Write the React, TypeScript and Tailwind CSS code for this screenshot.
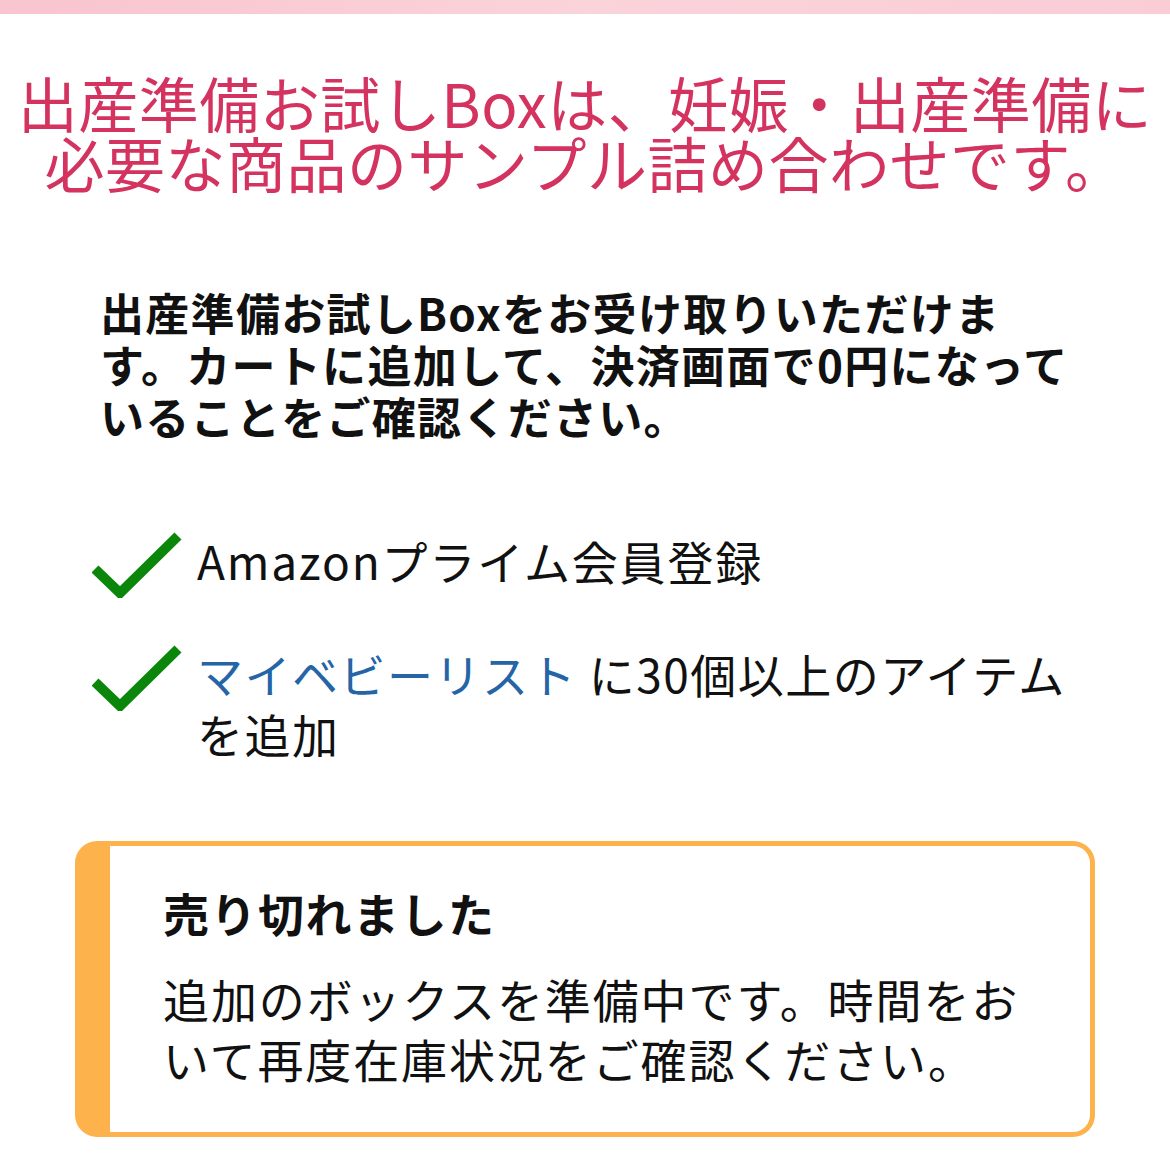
import React from 'react';

const JP = { fontFamily: '"Noto Sans CJK JP", "Noto Sans", sans-serif' };

function Check() {
  return (
    <svg width="90" height="66" viewBox="0 0 90 66" className="shrink-0 mt-[2px]">
      <polyline points="3,37 28,61 86,4" fill="none" stroke="#0a870a" strokeWidth="10" />
    </svg>
  );
}

export default function App() {
  return (
    <div className="w-[1170px] min-h-[1163px] bg-white text-[#111]" style={JP}>
      <div className="h-[14px] bg-gradient-to-r from-[#f8c4cf] via-[#fbd3db] to-[#f9ccd6]" />

      <h1 className="mt-[58px] text-center text-[60px] leading-[60px] font-normal text-[#d3335e] tracking-[0.5px]">
        出産準備お試しBoxは、妊娠・出産準備に
        <br />
        必要な商品のサンプル詰め合わせです。
      </h1>

      <p className="mt-[94px] pl-[100px] text-[44px] leading-[52px] font-bold tracking-[1.3px]">
        出産準備お試しBoxをお受け取りいただけま
        <br />
        す。カートに追加して、決済画面で0円になって
        <br />
        いることをご確認ください。
      </p>

      <ul className="mt-[88px] pl-[92px] flex flex-col gap-[45px]">
        <li className="flex items-start gap-[15px]">
          <Check />
          <span className="text-[46px] leading-[60px] tracking-[1.8px]">Amazonプライム会員登録</span>
        </li>
        <li className="flex items-start gap-[15px]">
          <Check />
          <span className="text-[46px] leading-[60px] tracking-[1.5px]">
            <span className="text-[#2565a6]">マイベビーリスト</span> に30個以上のアイテム
            <br />
            を追加
          </span>
        </li>
      </ul>

      <div className="mt-[78px] ml-[75px] w-[1020px] h-[296px] rounded-[22px] border-[5px] border-l-[35px] border-[#fdb24c] pl-[53px] pt-[40px]">
        <div className="text-[46px] leading-[52px] font-bold tracking-[1.5px]">売り切れました</div>
        <div className="mt-[30px] text-[46px] leading-[60px] tracking-[1.9px]">
          追加のボックスを準備中です。時間をお
          <br />
          いて再度在庫状況をご確認ください。
        </div>
      </div>
    </div>
  );
}
